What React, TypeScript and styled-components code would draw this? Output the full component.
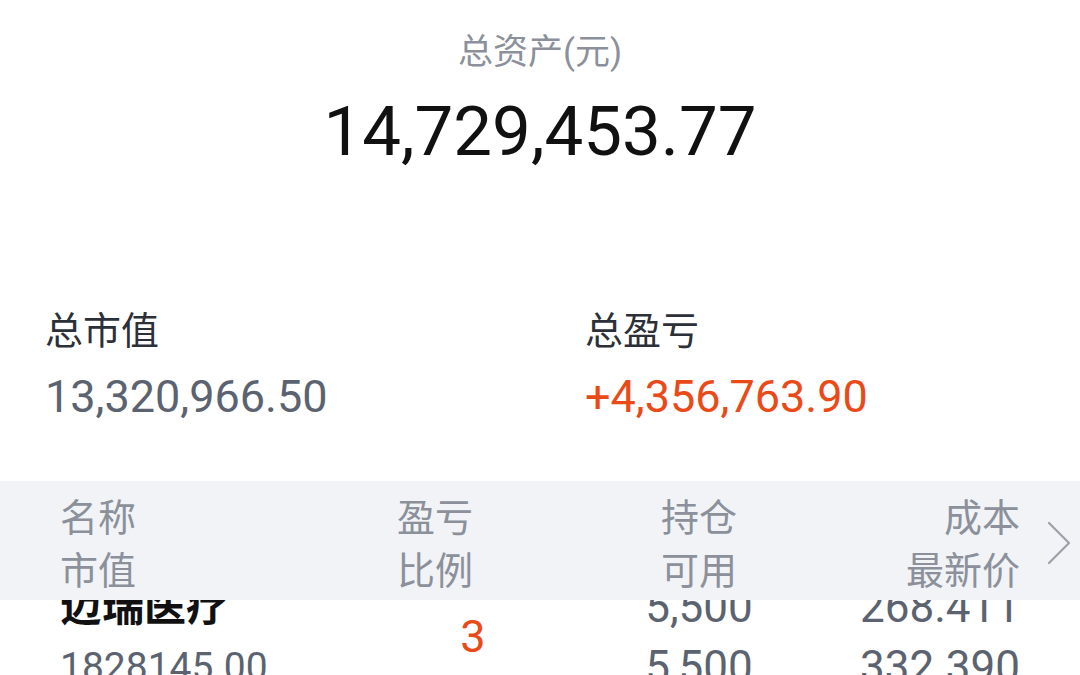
import React from "react";
import styled, { createGlobalStyle } from "styled-components";

const Global = createGlobalStyle`
  html, body { margin: 0; padding: 0; background: #ffffff; }
  body {
    width: 1080px;
    height: 675px;
    overflow: hidden;
    font-family: Roboto, "Noto Sans CJK SC", "Noto Sans", sans-serif;
    -webkit-font-smoothing: antialiased;
  }
`;

const Page = styled.div`
  width: 1080px;
  height: 675px;
  display: flex;
  flex-direction: column;
  overflow: hidden;
`;

const Summary = styled.section`
  display: flex;
  flex-direction: column;
  align-items: center;
  padding-top: 32px;
`;

const TotalLabel = styled.div`
  font-size: 35px;
  line-height: 42px;
  color: #8b909a;
`;

const TotalValue = styled.div`
  margin-top: 18px;
  font-size: 69px;
  line-height: 80px;
  color: #111111;
`;

const Stats = styled.section`
  display: grid;
  grid-template-columns: 540px 540px;
  padding-left: 45px;
  margin-top: 136px;
`;

const Stat = styled.div`
  display: flex;
  flex-direction: column;
`;

const StatLabel = styled.div`
  font-size: 38px;
  line-height: 46px;
  color: #2c3038;
`;

const StatValue = styled.div<{ $tone: "gray" | "up" }>`
  margin-top: 16px;
  font-size: 45px;
  line-height: 54px;
  color: ${(p) => (p.$tone === "up" ? "#ea4a18" : "#5c6370")};
`;

const Table = styled.section`
  margin-top: 57px;
  display: flex;
  flex-direction: column;
  flex: 1;
  min-height: 0;
`;

const cols = "250px 250px 278px 182px 60px";

const HeaderRow = styled.div`
  position: relative;
  z-index: 1;
  display: grid;
  grid-template-columns: ${cols};
  padding: 11px 0 2px 60px;
  height: 119px;
  box-sizing: border-box;
  background: #f1f3f7;
`;

const HeadCell = styled.div<{ $align: "left" | "center" | "right" }>`
  display: flex;
  flex-direction: column;
  align-items: ${(p) =>
    p.$align === "left" ? "flex-start" : p.$align === "right" ? "flex-end" : "center"};
  font-size: 38px;
  line-height: 53px;
  color: #8b909a;
`;

const ChevronCell = styled.div`
  display: flex;
  align-items: center;
  justify-content: flex-end;
  padding-right: 8px;
  padding-bottom: 4px;
`;

const Body = styled.div`
  flex: 1;
  min-height: 0;
  overflow: hidden;
`;

const Row = styled.div`
  display: grid;
  grid-template-columns: ${cols};
  padding-left: 60px;
  margin-top: -23px;
  height: 120px;
`;

const Cell = styled.div<{ $align: "left" | "center" | "right"; $shift?: number }>`
  display: flex;
  flex-direction: column;
  align-items: ${(p) =>
    p.$align === "left" ? "flex-start" : p.$align === "right" ? "flex-end" : "center"};
  padding-left: ${(p) => (p.$shift ? p.$shift : 0)}px;
`;

const Line = styled.div<{ $size: number; $color: string; $bold?: boolean }>`
  font-size: ${(p) => p.$size}px;
  line-height: 60px;
  color: ${(p) => p.$color};
  font-weight: ${(p) => (p.$bold ? 700 : 400)};
  white-space: nowrap;
`;

const Ratio = styled.div`
  font-size: 45px;
  line-height: 120px;
  color: #ea4a18;
`;

const Chevron = () => (
  <svg width="26" height="44" viewBox="0 0 26 44" fill="none">
    <path d="M3 2 L23 22 L3 42" stroke="#9ca1a9" strokeWidth="2.2" strokeLinecap="round" strokeLinejoin="round" />
  </svg>
);

export default function App() {
  return (
    <>
      <Global />
      <Page>
        <Summary>
          <TotalLabel>总资产(元)</TotalLabel>
          <TotalValue>14,729,453.77</TotalValue>
        </Summary>
        <Stats>
          <Stat>
            <StatLabel>总市值</StatLabel>
            <StatValue $tone="gray">13,320,966.50</StatValue>
          </Stat>
          <Stat>
            <StatLabel>总盈亏</StatLabel>
            <StatValue $tone="up">+4,356,763.90</StatValue>
          </Stat>
        </Stats>
        <Table>
          <HeaderRow>
            <HeadCell $align="left">
              <span>名称</span>
              <span>市值</span>
            </HeadCell>
            <HeadCell $align="center">
              <span>盈亏</span>
              <span>比例</span>
            </HeadCell>
            <HeadCell $align="center">
              <span>持仓</span>
              <span>可用</span>
            </HeadCell>
            <HeadCell $align="right">
              <span>成本</span>
              <span>最新价</span>
            </HeadCell>
            <ChevronCell>
              <Chevron />
            </ChevronCell>
          </HeaderRow>
          <Body>
            <Row>
              <Cell $align="left">
                <Line $size={42} $color="#111111" $bold>迈瑞医疗</Line>
                <Line $size={39} $color="#5c6370">1828145.00</Line>
              </Cell>
              <Cell $align="center" $shift={76}>
                <Ratio>3</Ratio>
              </Cell>
              <Cell $align="center">
                <Line $size={44} $color="#5c6370">5,500</Line>
                <Line $size={44} $color="#5c6370">5,500</Line>
              </Cell>
              <Cell $align="right">
                <Line $size={44} $color="#5c6370">268.411</Line>
                <Line $size={44} $color="#5c6370">332.390</Line>
              </Cell>
              <div />
            </Row>
          </Body>
        </Table>
      </Page>
    </>
  );
}
